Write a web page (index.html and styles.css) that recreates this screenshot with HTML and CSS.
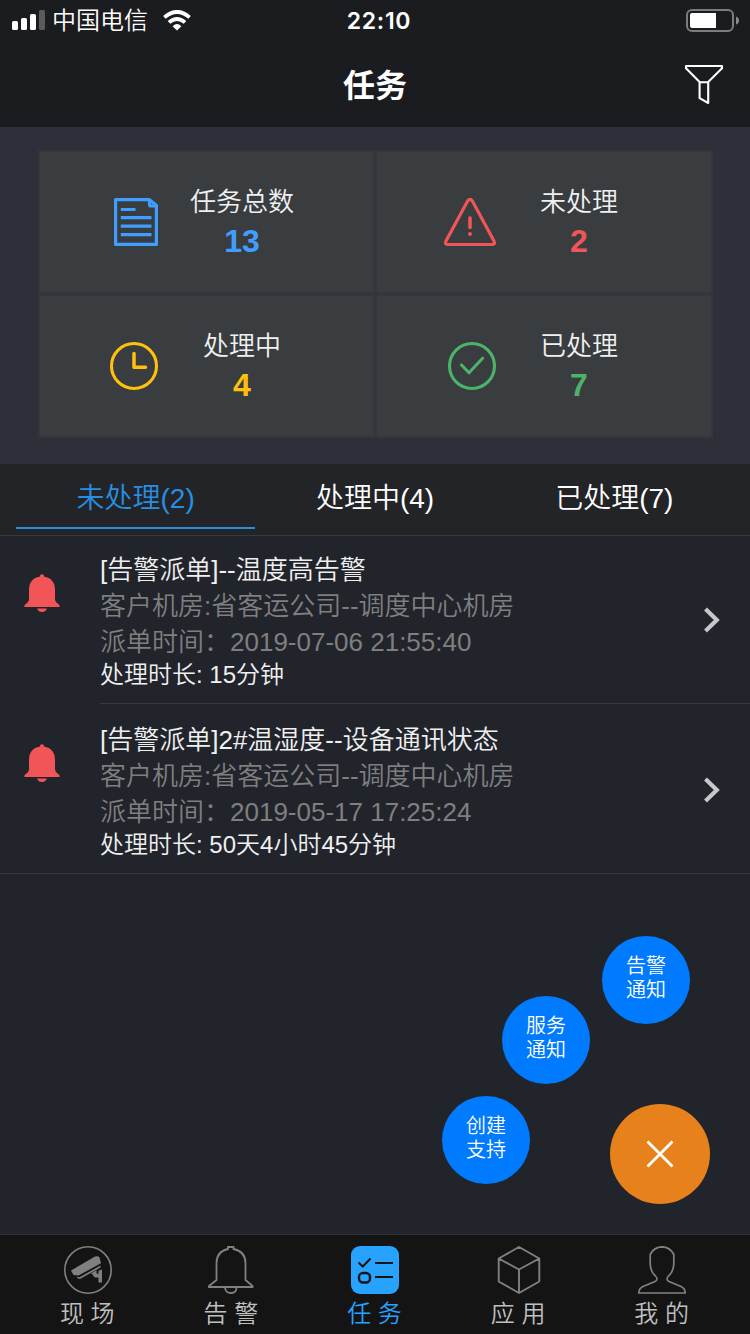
FILE: index.html
```html
<!DOCTYPE html>
<html lang="zh-CN">
<head>
<meta charset="utf-8">
<title>任务</title>
<link rel="stylesheet" href="styles.css">
</head>
<body>
<div class="app">
  <div class="status">
    <div class="status-left">
      <svg width="34" height="20" viewBox="0 0 34 20"><g fill="#fff"><rect x="0" y="11" width="6" height="9" rx="1.6"/><rect x="9" y="8" width="6" height="12" rx="1.6"/><rect x="18" y="4" width="6" height="16" rx="1.6"/></g><rect x="27" y="0" width="6" height="20" rx="1.6" fill="#5a5a5e"/></svg>
      <span class="carrier">中国电信</span>
      <svg class="wifi" width="28" height="21" viewBox="0 0 28 21"><g fill="none" stroke="#fff" stroke-width="3.8"><path d="M1.400 7.400Q14 -3.600 26.600 7.400"/><path d="M6 12.400Q14 5.400 22 12.400"/></g><path d="M9.600 16.200Q14 12 18.400 16.200L14 20.400Z" fill="#fff"/></svg>
    </div>
    <span class="time">22:10</span>
    <div class="status-right">
      <svg width="54" height="24" viewBox="0 0 54 24"><rect x="1" y="1" width="46" height="21" rx="5" fill="none" stroke="#7c7c7f" stroke-width="2"/><path d="M6 4H30V19H6Q4 19 4 17V6Q4 4 6 4Z" fill="#fff"/><path d="M50 7.500Q53 8.500 53 11.500T50 15.500Z" fill="#8b8b8e"/></svg>
    </div>
  </div>
  <header class="nav">
    <h1 class="title">任务</h1>
    <svg class="filter" width="40" height="42" viewBox="0 0 40 42"><path d="M2 3H38V5.300L24.200 19V40L15.600 35.200V19L2 5.300ZM15.600 19.200H24.200" fill="none" stroke="#fff" stroke-width="2.100" stroke-linejoin="round"/></svg>
  </header>

  <section class="summary">
    <div class="grid">
      <div class="cell blue">
        <svg class="cell-icon" width="60" height="60" viewBox="0 0 60 60"><g fill="none" stroke="currentColor" stroke-width="3.200"><path d="M9.600 7.600H43.500L50.400 13.500V52.400H9.600Z" stroke-linejoin="round"/><path d="M43.500 8V12.500Q43.500 14 45 14H50.400"/><path d="M14.800 17.500H29.500M14.800 25.700H45.500M14.800 34.200H45.500M14.800 42.600H45.500"/></g></svg>
        <div class="cell-text"><span class="cell-label">任务总数</span><b class="cell-num">13</b></div>
      </div>
      <div class="cell red">
        <svg class="cell-icon" width="60" height="60" viewBox="0 0 60 60"><path d="M24.600 9Q27 5.800 29.400 9L51 49Q52.500 52.500 49 52.500H5Q1.500 52.500 3 49Z" fill="none" stroke="currentColor" stroke-width="3.200"/><path d="M27 26V35.500" stroke="currentColor" stroke-width="3.600" stroke-linecap="round"/><circle cx="27" cy="42" r="2" fill="currentColor"/></svg>
        <div class="cell-text"><span class="cell-label">未处理</span><b class="cell-num">2</b></div>
      </div>
      <div class="cell yellow">
        <svg class="cell-icon" width="60" height="60" viewBox="0 0 60 60"><circle cx="28" cy="30" r="22.500" fill="none" stroke="currentColor" stroke-width="3.100"/><path d="M28 17.500V31.200H39.500" fill="none" stroke="currentColor" stroke-width="3.500" stroke-linecap="round" stroke-linejoin="round"/></svg>
        <div class="cell-text"><span class="cell-label">处理中</span><b class="cell-num">4</b></div>
      </div>
      <div class="cell green">
        <svg class="cell-icon" width="60" height="60" viewBox="0 0 60 60"><circle cx="29" cy="30" r="22.500" fill="none" stroke="currentColor" stroke-width="3.100"/><path d="M18.500 29L26 36.800L39.600 22.200" fill="none" stroke="currentColor" stroke-width="3.100" stroke-linecap="round" stroke-linejoin="round"/></svg>
        <div class="cell-text"><span class="cell-label">已处理</span><b class="cell-num">7</b></div>
      </div>
    </div>
  </section>

  <nav class="tabs">
    <a class="tab active">未处理(2)</a>
    <a class="tab">处理中(4)</a>
    <a class="tab">已处理(7)</a>
  </nav>

  <main class="list">
    <article class="item">
      <svg class="bell" width="36" height="38" viewBox="0 0 36 38"><path d="M16 2.500V1.500Q18 -1 20 1.500V2.500Q31 4.500 31 16V25Q31 28 35 30.500Q36 32 35.500 33H.5Q0 32 1 30.500Q5 28 5 25V16Q5 4.500 16 2.500ZM13 34.500H23Q21.500 38 18 38T13 34.500Z" fill="#f15557"/></svg>
      <div class="item-body">
        <div class="item-text">
          <p class="line">[告警派单]--温度高告警</p>
          <p class="line dim">客户机房:省客运公司--调度中心机房</p>
          <p class="line dim">派单时间：2019-07-06 21:55:40</p>
          <p class="line small">处理时长: 15分钟</p>
        </div>
        <svg class="chevron" width="18" height="26" viewBox="0 0 18 26"><path d="M2.500 2L13.800 13L2.500 24" fill="none" stroke="#c7c7cc" stroke-width="4.200"/></svg>
      </div>
    </article>
    <article class="item">
      <svg class="bell" width="36" height="38" viewBox="0 0 36 38"><path d="M16 2.500V1.500Q18 -1 20 1.500V2.500Q31 4.500 31 16V25Q31 28 35 30.500Q36 32 35.500 33H.5Q0 32 1 30.500Q5 28 5 25V16Q5 4.500 16 2.500ZM13 34.500H23Q21.500 38 18 38T13 34.500Z" fill="#f15557"/></svg>
      <div class="item-body">
        <div class="item-text">
          <p class="line">[告警派单]2#温湿度--设备通讯状态</p>
          <p class="line dim">客户机房:省客运公司--调度中心机房</p>
          <p class="line dim">派单时间：2019-05-17 17:25:24</p>
          <p class="line small">处理时长: 50天4小时45分钟</p>
        </div>
        <svg class="chevron" width="18" height="26" viewBox="0 0 18 26"><path d="M2.500 2L13.800 13L2.500 24" fill="none" stroke="#c7c7cc" stroke-width="4.200"/></svg>
      </div>
    </article>
  </main>

  <footer class="tabbar">
    <a class="dest">
      <svg width="48" height="48" viewBox="0 0 48 48"><circle cx="24" cy="24" r="23.200" fill="none" stroke="#808080" stroke-width="1.600"/><g fill="#808080"><path d="M7 24.500L31 10.500Q34 9.500 35.500 11.500L37 17.200L14.500 29.500L9.500 29Z"/><path d="M12.800 30.800L15.500 31.200L36.500 19.500V21.500L16 33L13.500 32.200Z"/><path d="M27 27.500L32.500 24.200V27Q32.500 28 34.500 28V24.800L38 23.500V36.500H34.500V31.500H31.500Q29.500 31 29 29Q28.500 28 27 27.500Z"/></g></svg>
      <span class="dest-label">现 场</span>
    </a>
    <a class="dest">
      <svg width="48" height="48" viewBox="0 0 48 48"><g fill="none" stroke="#808080" stroke-width="1.800"><path d="M21 3V1H26.500V3Q38.500 5.500 38.500 17V34L45.500 40V41H2V40L9.500 34V17Q9.500 5.500 21 3Z"/><path d="M18 41.500Q18.500 47 24 47T29.500 41.500"/></g></svg>
      <span class="dest-label">告 警</span>
    </a>
    <a class="dest on">
      <svg width="48" height="48" viewBox="0 0 48 48"><rect width="48" height="48" rx="9" fill="#27a3ff"/><g fill="none" stroke="#141414" stroke-width="2"><path d="M7.500 16.500L11.800 20.500L19.500 12.500M24 17H42M24 31H42"/><rect x="8" y="27" width="11" height="9.500" rx="4" stroke-width="2.400"/></g></svg>
      <span class="dest-label">任 务</span>
    </a>
    <a class="dest">
      <svg width="48" height="48" viewBox="0 0 48 48"><path d="M24 1L44.300 12.500V35.500L24 47L3.700 35.500V12.500ZM3.700 12.500L24 23.500L44.300 12.500M24 23.500V47" fill="none" stroke="#808080" stroke-width="1.900" stroke-linejoin="round"/></svg>
      <span class="dest-label">应 用</span>
    </a>
    <a class="dest">
      <svg width="48" height="48" viewBox="0 0 48 48"><path d="M24 .8Q32 1 35.800 8.500V18Q35.500 25.500 31 29.500Q27 33.500 31 35.500L43 40.500Q47.200 42.500 47.200 47H.8Q.8 42.500 5 40.500L17 35.500Q21 33.500 17 29.500Q12.500 25.500 12.200 18V8.500Q16 1 24 .8Z" fill="none" stroke="#808080" stroke-width="1.700"/></svg>
      <span class="dest-label">我 的</span>
    </a>
  </footer>

  <button class="bubble notice">告警<br>通知</button>
  <button class="bubble service">服务<br>通知</button>
  <button class="bubble support">创建<br>支持</button>
  <button class="fab"><svg width="28" height="28" viewBox="0 0 28 28"><path d="M1.500 1.500L26.500 26.500M26.500 1.500L1.500 26.500" stroke="#fff" stroke-width="2.800"/></svg></button>
</div>
</body>
</html>
```
FILE: styles.css
```css
* { box-sizing: border-box; }

body {
  margin: 0;
  background: #22242c;
  color: #fff;
  font-family: "Liberation Sans", "Noto Sans CJK SC", sans-serif;
  font-weight: 350;
}

svg { display: block; flex: none; }
p, h1 { margin: 0; }

.app {
  position: relative;
  width: 750px;
  height: 1334px;
  display: flex;
  flex-direction: column;
  overflow: hidden;
}

.status {
  display: grid;
  grid-template-columns: 1fr auto 1fr;
  align-items: center;
  height: 40px;
  padding: 0 10px 0 12px;
  background: #1b1c20;
}
.status-left { display: flex; align-items: center; }
.carrier { margin-left: 6px; padding-top: 2px; font-size: 24px; line-height: 38px; }
.wifi { margin-left: 15px; }
.time { font-family: Inter, sans-serif; font-size: 23px; font-weight: 600; letter-spacing: 0.7px; line-height: 38px; padding: 2px 0 0 6px; }
.status-right { display: flex; justify-content: flex-end; padding-top: 1px; }

.nav {
  display: grid;
  grid-template-columns: 1fr auto 1fr;
  align-items: center;
  height: 87px;
  padding: 0 26px 0 0;
  background: #1b1c20;
}
.title { grid-column: 2; padding: 4px 0 0 26px; font-size: 32px; font-weight: 700; line-height: 44px; }
.filter { justify-self: end; }

.summary { height: 337px; padding: 23px 38px 26px; background: #2e3039; }
.grid {
  display: grid;
  grid-template-columns: 333px 334px;
  grid-template-rows: 140px 140px;
  gap: 4px;
  width: 675px;
  padding: 2px;
  background: #33363a;
}
.cell { display: flex; align-items: center; padding-left: 66px; background: #393d40; }
.cell-text {
  display: flex;
  flex-direction: column;
  align-items: center;
  width: 120px;
  margin-left: 16px;
  line-height: 40px;
  padding-bottom: 2px;
}
.cell-label { height: 40px; padding-top: 1px; color: #f0f0f0; font-size: 26px; }
.cell-num { font-size: 32px; font-weight: 700; }
.blue { color: #409eff; }
.red { color: #f15557; }
.yellow { color: #ffc10e; }
.green { color: #4db36b; }

.tabs {
  display: flex;
  height: 72px;
  padding: 0 16px;
  background: #232427;
  border-bottom: 1px solid #38393b;
}
.tab {
  flex: 1;
  height: 65px;
  font-size: 28px;
  line-height: 69px;
  text-align: center;
}
.active { color: #268fe2; border-bottom: 2px solid #268fe2; }

.list { flex: 1; }
.item { display: flex; height: 168px; padding-left: 24px; }
.item + .item { height: 170px; padding-top: 2px; border-bottom: 1px solid #38393b; }
.bell { margin-top: 38px; }
.item-body {
  flex: 1;
  display: flex;
  justify-content: space-between;
  align-items: center;
  margin-left: 40px;
  padding-right: 29px;
  border-bottom: 1px solid #38393b;
}
.item + .item .item-body { border-bottom: 0; }
.item-text { align-self: flex-start; padding-top: 16px; }
.line { height: 36px; color: #f0f0f0; font-size: 26px; line-height: 36px; white-space: nowrap; }
.dim { color: #7f7f7f; }
.small { height: 30px; font-size: 24px; line-height: 30px; }

.tabbar {
  display: flex;
  height: 100px;
  padding: 11px 16px 0;
  border-top: 1px solid #303134;
  background: #141414;
}
.dest { flex: 1; display: flex; flex-direction: column; align-items: center; color: #bfbfbf; }
.dest-label { margin-top: 2px; padding-right: 1px; font-size: 24px; line-height: 36px; white-space: pre; }
.on { color: #27a3ff; }

/* Floating actions lie over the list */
.bubble, .fab {
  position: absolute;
  display: flex;
  justify-content: center;
  border: 0;
  border-radius: 50%;
  color: #fff;
  font: inherit;
}
.bubble {
  width: 88px;
  height: 88px;
  align-items: center;
  padding: 0 0 4px;
  background: #007aff;
  font-size: 20px;
  line-height: 24px;
}
.notice { left: 602px; top: 936px; }
.service { left: 502px; top: 996px; }
.support { left: 442px; top: 1096px; }
.fab { left: 610px; top: 1104px; width: 100px; height: 100px; align-items: center; padding: 0; background: #e6811c; }
```
